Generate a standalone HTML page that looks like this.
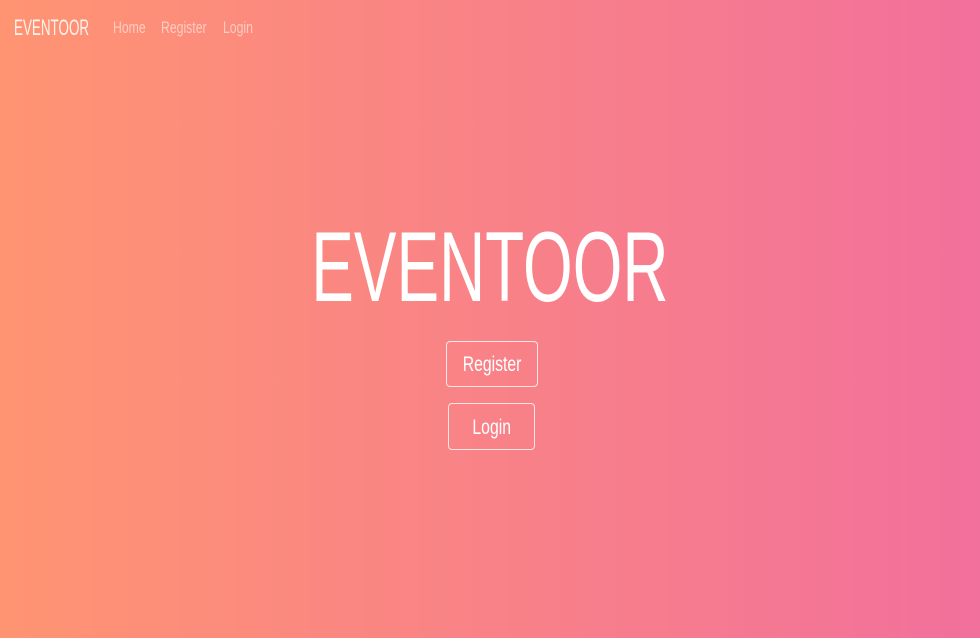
<!DOCTYPE html>
<html><head><meta charset="utf-8"><style>
html,body{margin:0;padding:0;width:980px;height:638px;overflow:hidden}
body{background:linear-gradient(to right,#ff9472,#f2709c);font-family:"Liberation Sans",sans-serif;color:#fff;position:relative}
.s{display:inline-block;white-space:nowrap}
.brand{position:absolute;left:14px;top:15px;font-size:22px;line-height:26px;color:#fdf3ee;transform:scaleX(.61);transform-origin:left}
.nav{position:absolute;top:18px;font-size:17px;line-height:20px;color:rgba(255,255,255,.55);transform:scaleX(.72);transform-origin:left}
h1{position:absolute;left:0;width:980px;top:212px;margin:0;text-align:center;font-weight:normal;font-size:99px;line-height:110px}
h1 .s{transform:scaleX(.645)}
.btn{position:absolute;border:1px solid rgba(255,255,255,.8);border-radius:4px;font-size:21px;text-align:center;box-sizing:border-box}
.btn .s{transform:scaleX(.75)}
</style></head><body>
<div class="brand">EVENTOOR</div>
<div class="nav" style="left:113px">Home</div>
<div class="nav" style="left:161px">Register</div>
<div class="nav" style="left:223px">Login</div>
<h1><span class="s">EVENTOOR</span></h1>
<div class="btn" style="left:446px;top:341px;width:92px;height:46px;line-height:46px"><span class="s">Register</span></div>
<div class="btn" style="left:448px;top:403px;width:87px;height:47px;line-height:47px"><span class="s">Login</span></div>
</body></html>
